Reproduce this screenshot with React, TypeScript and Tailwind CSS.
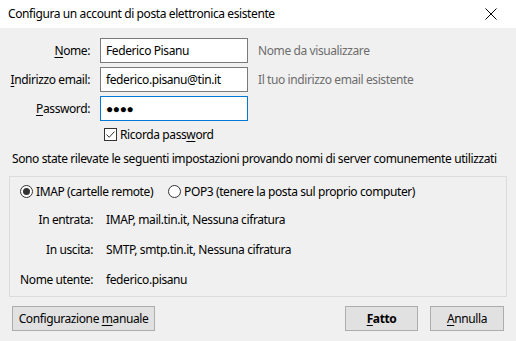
import React from 'react';

const font = { fontFamily: '"Noto Sans", "Open Sans", sans-serif' };

function Field({ ul, rest, value, hint, focused }: { ul: string; rest: string; value: string; hint?: string; focused?: boolean }) {
  return (
    <div className="flex items-center h-[25px]">
      <div className="w-[91px] text-right pr-px">
        <u className="underline-offset-2">{ul}</u>
        {rest}
      </div>
      <div
        className={`ml-[9px] w-[148px] h-[25px] bg-white border flex items-center px-[5px] ${
          focused ? 'border-[#0078d7]' : 'border-[#7a7a7a]'
        }`}
      >
        {value}
      </div>
      {hint && <div className="ml-[10px] text-[#6d6d6d]">{hint}</div>}
    </div>
  );
}

function InfoRow({ label, value }: { label: string; value: string }) {
  return (
    <div className="flex items-center h-[30px]">
      <div className="w-[83px] text-right">{label}</div>
      <div className="ml-[13px]">{value}</div>
    </div>
  );
}

export default function App() {
  return (
    <div
      className="w-[516px] h-[341px] bg-[#f0f0f0] text-[12px] leading-[16px] tracking-[-0.4px] text-black overflow-hidden whitespace-nowrap"
      style={font}
    >
      {/* Title bar */}
      <div className="h-[28px] bg-white flex items-center justify-between pl-[8px] pr-[19px]">
        <span>Configura un account di posta elettronica esistente</span>
        <svg width="12" height="12" viewBox="0 0 12 12">
          <path d="M0.5 0.5 L11.5 11.5 M11.5 0.5 L0.5 11.5" stroke="#000" strokeWidth="1" />
        </svg>
      </div>

      {/* Account fields */}
      <div className="pt-[10px] flex flex-col gap-[4px]">
        <Field ul="N" rest="ome:" value="Federico Pisanu" hint="Nome da visualizzare" />
        <Field ul="I" rest="ndirizzo email:" value="federico.pisanu@tin.it" hint="Il tuo indirizzo email esistente" />
        <Field ul="P" rest="assword:" value="●●●●" focused />
      </div>

      <div className="flex items-center mt-[6px] ml-[104px] h-[15px]">
        <div className="w-[13px] h-[13px] border border-[#333] bg-white flex items-center justify-center">
          <svg width="11" height="11" viewBox="0 0 11 11">
            <path d="M1.5 5.5 L4.2 8.3 L9.5 2.5" fill="none" stroke="#333" strokeWidth="1" />
          </svg>
        </div>
        <span className="ml-[3px]">
          Ricorda pass<u className="underline-offset-2">w</u>ord
        </span>
      </div>

      <div className="ml-[12px] mt-[9px] h-[16px]">
        Sono state rilevate le seguenti impostazioni provando nomi di server comunemente utilizzati
      </div>

      {/* Settings group */}
      <div className="mx-[9px] mt-[9px] h-[121px] border border-[#dcdcdc]">
        <div className="flex items-center h-[28px] pl-[10px] pt-[1px]">
          <div className="w-[13px] h-[13px] rounded-full border border-[#333] bg-white flex items-center justify-center">
            <div className="w-[7px] h-[7px] rounded-full bg-[#333]" />
          </div>
          <span className="ml-[3px]">IMAP (cartelle remote)</span>
          <div className="ml-[15px] w-[13px] h-[13px] rounded-full border border-[#333] bg-white" />
          <span className="ml-[3px]">POP3 (tenere la posta sul proprio computer)</span>
        </div>
        <InfoRow label="In entrata:" value="IMAP, mail.tin.it, Nessuna cifratura" />
        <InfoRow label="In uscita:" value="SMTP, smtp.tin.it, Nessuna cifratura" />
        <InfoRow label="Nome utente:" value="federico.pisanu" />
      </div>

      {/* Buttons */}
      <div className="flex items-center mt-[9px] px-[12px]">
        <button className="w-[143px] h-[25px] border border-[#adadad] bg-[#e1e1e1]">
          Configurazione <u className="underline-offset-2">m</u>anuale
        </button>
        <div className="flex-1" />
        <button className="w-[73px] h-[25px] border border-[#adadad] bg-[#e1e1e1] font-bold">
          <u className="underline-offset-2">F</u>atto
        </button>
        <button className="ml-[12px] w-[74px] h-[25px] border border-[#adadad] bg-[#e1e1e1]">
          <u className="underline-offset-2">A</u>nnulla
        </button>
      </div>
    </div>
  );
}
